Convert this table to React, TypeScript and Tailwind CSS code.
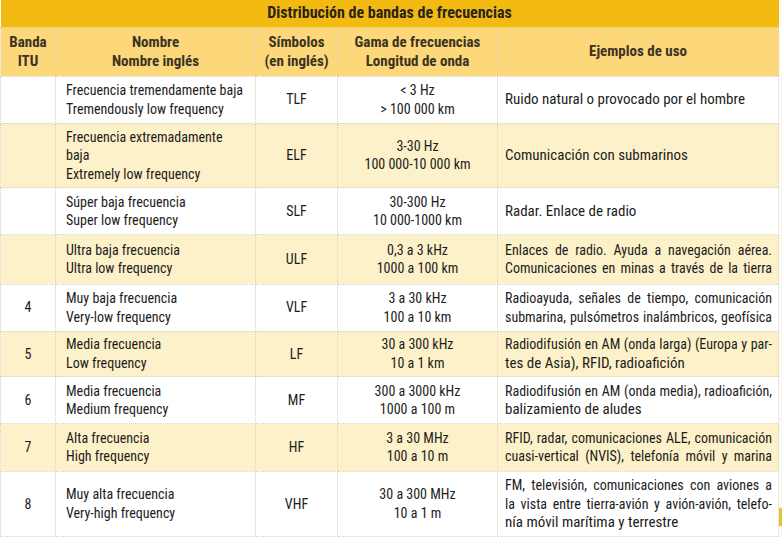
type Row = {
  band: string;
  name: string[];
  sym: string;
  range: string[];
  uses: { text: string; justify?: boolean }[];
  cream: boolean;
  h: string;
};

const rows: Row[] = [
  {
    band: "",
    name: ["Frecuencia tremendamente baja", "Tremendously low frequency"],
    sym: "TLF",
    range: ["< 3 Hz", "> 100 000 km"],
    uses: [{ text: "Ruido natural o provocado por el hombre" }],
    cream: false,
    h: "h-[47px]",
  },
  {
    band: "",
    name: ["Frecuencia extremadamente", "baja", "Extremely low frequency"],
    sym: "ELF",
    range: ["3-30 Hz", "100 000-10 000 km"],
    uses: [{ text: "Comunicación con submarinos" }],
    cream: true,
    h: "h-[64px]",
  },
  {
    band: "",
    name: ["Súper baja frecuencia", "Super low frequency"],
    sym: "SLF",
    range: ["30-300 Hz", "10 000-1000 km"],
    uses: [{ text: "Radar. Enlace de radio" }],
    cream: false,
    h: "h-[47px]",
  },
  {
    band: "",
    name: ["Ultra baja frecuencia", "Ultra low frequency"],
    sym: "ULF",
    range: ["0,3 a 3 kHz", "1000 a 100 km"],
    uses: [
      { text: "Enlaces de radio. Ayuda a navegación aérea.", justify: true },
      { text: "Comunicaciones en minas a través de la tierra", justify: true },
    ],
    cream: true,
    h: "h-[49px]",
  },
  {
    band: "4",
    name: ["Muy baja frecuencia", "Very-low frequency"],
    sym: "VLF",
    range: ["3 a 30 kHz", "100 a 10 km"],
    uses: [
      { text: "Radioayuda, señales de tiempo, comunicación", justify: true },
      { text: "submarina, pulsómetros inalámbricos, geofísica", justify: true },
    ],
    cream: false,
    h: "h-[47px]",
  },
  {
    band: "5",
    name: ["Media frecuencia", "Low frequency"],
    sym: "LF",
    range: ["30 a 300 kHz", "10 a 1 km"],
    uses: [
      { text: "Radiodifusión en AM (onda larga) (Europa y par-", justify: true },
      { text: "tes de Asia), RFID, radioafición" },
    ],
    cream: true,
    h: "h-[45px]",
  },
  {
    band: "6",
    name: ["Media frecuencia", "Medium frequency"],
    sym: "MF",
    range: ["300 a 3000 kHz", "1000 a 100 m"],
    uses: [
      { text: "Radiodifusión en AM (onda media), radioafición,", justify: true },
      { text: "balizamiento de aludes" },
    ],
    cream: false,
    h: "h-[47px]",
  },
  {
    band: "7",
    name: ["Alta frecuencia", "High frequency"],
    sym: "HF",
    range: ["3 a 30 MHz", "100 a 10 m"],
    uses: [
      { text: "RFID, radar, comunicaciones ALE, comunicación", justify: true },
      { text: "cuasi-vertical (NVIS), telefonía móvil y marina", justify: true },
    ],
    cream: true,
    h: "h-[47px]",
  },
  {
    band: "8",
    name: ["Muy alta frecuencia", "Very-high frequency"],
    sym: "VHF",
    range: ["30 a 300 MHz", "10 a 1 m"],
    uses: [
      { text: "FM, televisión, comunicaciones con aviones a", justify: true },
      { text: "la vista entre tierra-avión y avión-avión, telefo-", justify: true },
      { text: "nía móvil marítima y terrestre" },
    ],
    cream: false,
    h: "h-[65px]",
  },
];

const cell = "border border-dotted border-[#d9d2bd] align-middle";

export default function App() {
  return (
    <div className="flex w-[782px] h-[537px] overflow-hidden bg-[#fcfaf4] font-['Roboto_Condensed','Roboto',sans-serif] [font-stretch:condensed] text-[#1c1c1c]">
      <table className="w-[778px] shrink-0 table-fixed border-collapse text-[14px] leading-[18.5px]">
        <colgroup>
          <col className="w-[55px]" />
          <col className="w-[200px]" />
          <col className="w-[82px]" />
          <col className="w-[160px]" />
          <col className="w-[281px]" />
        </colgroup>
        <thead>
          <tr className="h-[27px] bg-[#f3ba12]">
            <th colSpan={5} className="border-b border-dotted border-[#e8c96a] text-center font-bold text-[16px] text-[#2a2418]">
              Distribución de bandas de frecuencias
            </th>
          </tr>
          <tr className="h-[49px] bg-[#fcd87a] text-[#3b3322] text-[15px] leading-[19px]">
            <th className={`${cell} font-bold`}>
              Banda
              <br />
              ITU
            </th>
            <th className={`${cell} font-bold`}>
              Nombre
              <br />
              Nombre inglés
            </th>
            <th className={`${cell} font-bold`}>
              Símbolos
              <br />
              (en inglés)
            </th>
            <th className={`${cell} font-bold`}>
              Gama de frecuencias
              <br />
              Longitud de onda
            </th>
            <th className={`${cell} font-bold`}>Ejemplos de uso</th>
          </tr>
        </thead>
        <tbody>
          {rows.map((r) => (
            <tr key={r.sym} className={`${r.h} ${r.cream ? "bg-[#fdf1c9]" : "bg-white"}`}>
              <td className={`${cell} text-center`}>{r.band}</td>
              <td className={`${cell} pl-[10px] pr-1`}>
                {r.name.map((n) => (
                  <div key={n}>{n}</div>
                ))}
              </td>
              <td className={`${cell} text-center`}>{r.sym}</td>
              <td className={`${cell} text-center`}>
                {r.range.map((n) => (
                  <div key={n}>{n}</div>
                ))}
              </td>
              <td className={`${cell} pl-[7px] pr-[6px]`}>
                {r.uses.map((u) => (
                  <div
                    key={u.text}
                    className={
                      u.justify
                        ? "text-justify [text-align-last:justify]"
                        : "whitespace-nowrap text-[15px]"
                    }
                  >
                    {u.text}
                  </div>
                ))}
              </td>
            </tr>
          ))}
        </tbody>
      </table>
      <div className="flex w-[4px] flex-col">
        <div className="mt-[508px] h-[18px] bg-[#e9c03a]" />
      </div>
    </div>
  );
}
